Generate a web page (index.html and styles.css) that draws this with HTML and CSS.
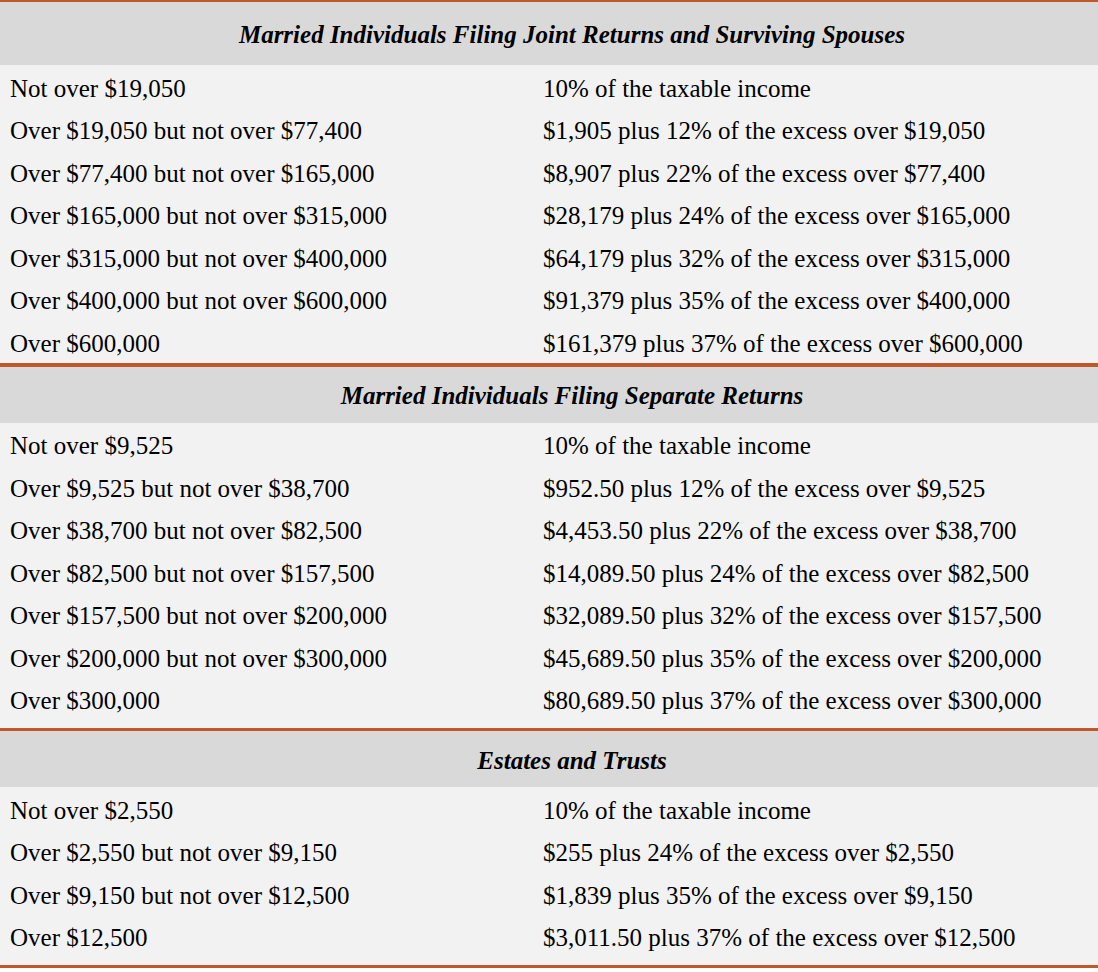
FILE: index.html
```html
<!DOCTYPE html>
<html>
<head>
<meta charset="utf-8">
<link rel="stylesheet" href="styles.css">
</head>
<body>
<div class="table">
  <div class="section first">
    <div class="head">Married Individuals Filing Joint Returns and Surviving Spouses</div>
    <div class="rows">
      <div class="row"><div class="c1">Not over $19,050</div><div class="c2">10% of the taxable income</div></div>
      <div class="row"><div class="c1">Over $19,050 but not over $77,400</div><div class="c2">$1,905 plus 12% of the excess over $19,050</div></div>
      <div class="row"><div class="c1">Over $77,400 but not over $165,000</div><div class="c2">$8,907 plus 22% of the excess over $77,400</div></div>
      <div class="row"><div class="c1">Over $165,000 but not over $315,000</div><div class="c2">$28,179 plus 24% of the excess over $165,000</div></div>
      <div class="row"><div class="c1">Over $315,000 but not over $400,000</div><div class="c2">$64,179 plus 32% of the excess over $315,000</div></div>
      <div class="row"><div class="c1">Over $400,000 but not over $600,000</div><div class="c2">$91,379 plus 35% of the excess over $400,000</div></div>
      <div class="row"><div class="c1">Over $600,000</div><div class="c2">$161,379 plus 37% of the excess over $600,000</div></div>
    </div>
  </div>
  <div class="section">
    <div class="head">Married Individuals Filing Separate Returns</div>
    <div class="rows">
      <div class="row"><div class="c1">Not over $9,525</div><div class="c2">10% of the taxable income</div></div>
      <div class="row"><div class="c1">Over $9,525 but not over $38,700</div><div class="c2">$952.50 plus 12% of the excess over $9,525</div></div>
      <div class="row"><div class="c1">Over $38,700 but not over $82,500</div><div class="c2">$4,453.50 plus 22% of the excess over $38,700</div></div>
      <div class="row"><div class="c1">Over $82,500 but not over $157,500</div><div class="c2">$14,089.50 plus 24% of the excess over $82,500</div></div>
      <div class="row"><div class="c1">Over $157,500 but not over $200,000</div><div class="c2">$32,089.50 plus 32% of the excess over $157,500</div></div>
      <div class="row"><div class="c1">Over $200,000 but not over $300,000</div><div class="c2">$45,689.50 plus 35% of the excess over $200,000</div></div>
      <div class="row"><div class="c1">Over $300,000</div><div class="c2">$80,689.50 plus 37% of the excess over $300,000</div></div>
    </div>
  </div>
  <div class="section">
    <div class="head">Estates and Trusts</div>
    <div class="rows">
      <div class="row"><div class="c1">Not over $2,550</div><div class="c2">10% of the taxable income</div></div>
      <div class="row"><div class="c1">Over $2,550 but not over $9,150</div><div class="c2">$255 plus 24% of the excess over $2,550</div></div>
      <div class="row"><div class="c1">Over $9,150 but not over $12,500</div><div class="c2">$1,839 plus 35% of the excess over $9,150</div></div>
      <div class="row"><div class="c1">Over $12,500</div><div class="c2">$3,011.50 plus 37% of the excess over $12,500</div></div>
    </div>
  </div>
</div>
</body>
</html>
```
FILE: styles.css
```css
html, body {
  margin: 0;
  padding: 0;
  background: #ffffff;
}
body {
  font-family: "Liberation Serif", "Times New Roman", serif;
  color: #000;
  font-size: 25px;
}
.table {
  width: 1098px;
  border-top: 2px solid #c0582b;
}
.section {
  border-bottom: 3px solid #c0582b;
  background: #f2f2f2;
}
.section.first {
  border-bottom-width: 4px;
}
.head {
  background: #d9d9d9;
  height: 56px;
  display: flex;
  align-items: center;
  justify-content: center;
  font-weight: bold;
  font-style: italic;
  padding-top: 3px;
  padding-left: 46px;
  box-sizing: border-box;
}
.first .head {
  height: 63px;
  padding-top: 2px;
}
.rows {
  display: flex;
  flex-direction: column;
  padding-bottom: 8px;
}
.first .rows {
  padding-bottom: 0;
}
.row {
  height: 42.5px;
  display: grid;
  grid-template-columns: 533px 1fr;
  align-items: center;
  padding-top: 5px;
  box-sizing: border-box;
}
.c1 {
  padding-left: 10px;
  white-space: nowrap;
}
.c2 {
  padding-left: 10px;
  white-space: nowrap;
}
```
